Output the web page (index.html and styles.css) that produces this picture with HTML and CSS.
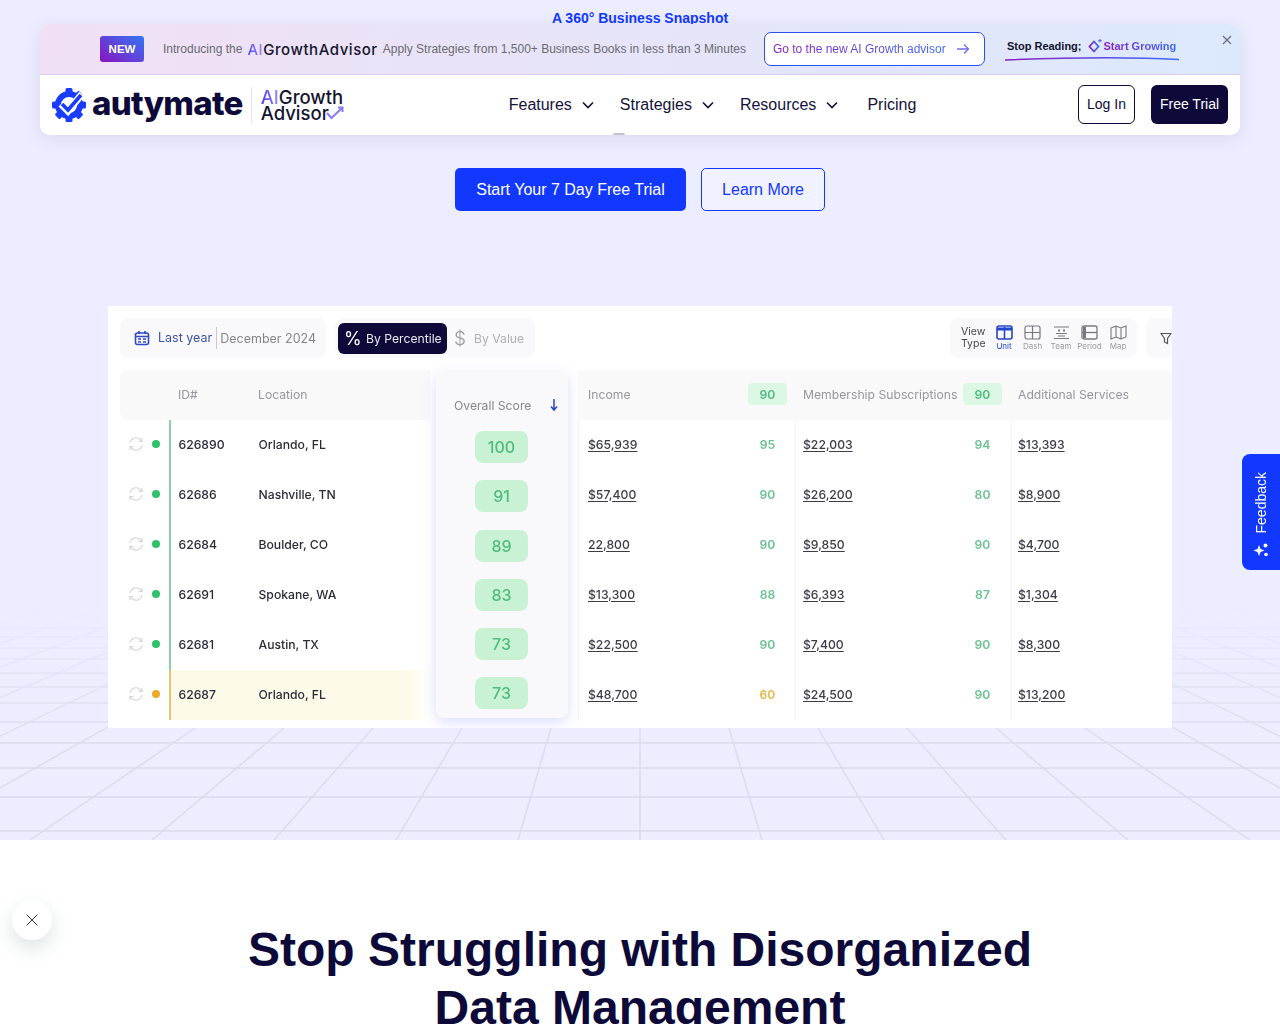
FILE: index.html
```html
<!DOCTYPE html>
<html lang="en">
<head>
<meta charset="utf-8">
<title>Autymate</title>
<link rel="stylesheet" href="styles.css">
</head>
<body>
<svg class="defs" width="0" height="0" aria-hidden="true">
  <defs>
    <linearGradient id="gradBrand" x1="0" y1="0" x2="1" y2="0"><stop offset="0" stop-color="#8a1fc4"/><stop offset="1" stop-color="#3a6bf5"/></linearGradient>
    <linearGradient id="fade" x1="0" y1="600" x2="0" y2="760" gradientUnits="userSpaceOnUse"><stop offset="0" stop-color="#fff" stop-opacity="0"/><stop offset="1" stop-color="#fff"/></linearGradient>
    <mask id="gridMask" maskUnits="userSpaceOnUse" x="0" y="0" width="1280" height="840"><rect width="1280" height="840" fill="url(#fade)"/></mask>
    <symbol id="sync" viewBox="0 0 16 16"><path d="M2 7a6 6 0 0 1 10.4-3.2L14 5.5M14 2v3.5h-3.5M14 9a6 6 0 0 1-10.4 3.2L2 10.5M2 14v-3.5h3.5" fill="none" stroke="#d5d6da" stroke-width="1.2"/></symbol>
  </defs>
</svg>
<div class="page">
  <section class="hero">
    <svg class="grid-bg" width="1280" height="840" viewBox="0 0 1280 840" aria-hidden="true">
      <g mask="url(#gridMask)" stroke="#d9daee" stroke-width="1.4" fill="none">
        <path d="M0 628H1280M0 637H1280M0 648H1280M0 659H1280M0 673H1280M0 687H1280M0 703H1280M0 722H1280M0 743H1280M0 768H1280M0 797H1280M0 831H1280"/>
        <path d="M640 426L-824 840M640 426L-702 840M640 426L-580 840M640 426L-458 840M640 426L-336 840M640 426L-214 840M640 426L-92 840M640 426L30 840M640 426L152 840M640 426L274 840M640 426L396 840M640 426L518 840M640 426L640 840M640 426L762 840M640 426L884 840M640 426L1006 840M640 426L1128 840M640 426L1250 840M640 426L1372 840M640 426L1494 840M640 426L1616 840M640 426L1738 840M640 426L1860 840M640 426L1982 840M640 426L2104 840"/>
      </g>
    </svg>
    <p class="tagline">A 360° Business Snapshot</p>
    <div class="cta-row">
      <a class="btn btn-primary">Start Your 7 Day Free Trial</a>
      <a class="btn btn-outline">Learn More</a>
    </div>

    <div class="panel">
      <div class="toolbar">
        <div class="pill pill-date">
          <svg class="ico-cal" width="16" height="16" viewBox="0 0 16 16"><rect x="1.5" y="3" width="13" height="11.5" rx="2" fill="none" stroke="#2f47c8" stroke-width="1.6"/><path d="M1.5 6.5h13M5 1v3M11 1v3" stroke="#2f47c8" stroke-width="1.6"/><path d="M4 9h3M9 9h3M4 12h3M9 12h3" stroke="#2f47c8" stroke-width="1.3"/></svg>
          <span class="last-year">Last year</span>
          <span class="date-val">December 2024</span>
        </div>
        <div class="pill pill-mode">
          <span class="mode-on"><span class="mode-sym">%</span>By Percentile</span>
          <span class="mode-off"><span class="mode-sym">$</span>By Value</span>
        </div>
        <div class="pill pill-view">
          <span class="view-title">View<br>Type</span>
          <span class="view-item view-on"><svg width="17" height="15" viewBox="0 0 17 15"><rect x="1" y="1" width="15" height="13" rx="2" fill="none" stroke="#2446c8" stroke-width="1.6"/><path d="M1 2.5h15v3H1z" fill="#2446c8"/><path d="M8.5 2v12" stroke="#2446c8" stroke-width="1.6"/></svg>Unit</span>
          <span class="view-item"><svg width="17" height="15" viewBox="0 0 17 15"><rect x="1" y="1" width="15" height="13" rx="2" fill="none" stroke="#77777f" stroke-width="1.2"/><path d="M8.5 1v13M1 7.5h15" stroke="#77777f" stroke-width="1.2"/></svg>Dash</span>
          <span class="view-item"><svg width="17" height="15" viewBox="0 0 17 15"><path d="M1 2h15M1 13.5h15M3 8.5h11M5 11h7" stroke="#77777f" stroke-width="1.1"/><path d="M5 4.5h2v2H5zM10 4.5h2v2h-2z" fill="#77777f"/></svg>Team</span>
          <span class="view-item"><svg width="17" height="15" viewBox="0 0 17 15"><rect x="1" y="1" width="15" height="13" rx="2" fill="none" stroke="#77777f" stroke-width="1.3"/><path d="M1 7.5h15" stroke="#77777f" stroke-width="1.3"/><path d="M2 2h3v11H2z" fill="#77777f"/></svg>Period</span>
          <span class="view-item"><svg width="17" height="15" viewBox="0 0 17 15"><path d="M1 3l5-2 5 2 5-2v11l-5 2-5-2-5 2zM6 1v11M11 3v11" fill="none" stroke="#77777f" stroke-width="1.1"/></svg>Map</span>
        </div>
        <div class="pill pill-filter">
          <svg width="12" height="13" viewBox="0 0 12 13"><path d="M1 1.500h10L7.500 6.500v5l-3-1.500V6.500z" fill="none" stroke="#55555c" stroke-width="1.2"/></svg>
        </div>
      </div>

      <div class="tbl">
        <div class="col-left">
          <div class="hd-left"><span class="c-id">ID#</span><span>Location</span></div>
          <div class="row-left"><span class="status"><svg class="sync" width="16" height="16"><use href="#sync"/></svg><i class="dot"></i></span><span class="row-main"><span class="c-id">626890</span><span>Orlando, FL</span></span></div>
          <div class="row-left"><span class="status"><svg class="sync" width="16" height="16"><use href="#sync"/></svg><i class="dot"></i></span><span class="row-main"><span class="c-id">62686</span><span>Nashville, TN</span></span></div>
          <div class="row-left"><span class="status"><svg class="sync" width="16" height="16"><use href="#sync"/></svg><i class="dot"></i></span><span class="row-main"><span class="c-id">62684</span><span>Boulder, CO</span></span></div>
          <div class="row-left"><span class="status"><svg class="sync" width="16" height="16"><use href="#sync"/></svg><i class="dot"></i></span><span class="row-main"><span class="c-id">62691</span><span>Spokane, WA</span></span></div>
          <div class="row-left"><span class="status"><svg class="sync" width="16" height="16"><use href="#sync"/></svg><i class="dot"></i></span><span class="row-main"><span class="c-id">62681</span><span>Austin, TX</span></span></div>
          <div class="row-left row-warn"><span class="status"><svg class="sync" width="16" height="16"><use href="#sync"/></svg><i class="dot dot-warn"></i></span><span class="row-main"><span class="c-id">62687</span><span>Orlando, FL</span></span></div>
        </div>

        <div class="col-score">
          <div class="hd-score"><span>Overall Score</span><svg width="10" height="14" viewBox="0 0 10 14"><path d="M5 1v11M2 8.500l3 3.500 3-3.500" fill="none" stroke="#2446c8" stroke-width="1.5"/></svg></div>
          <div class="chip-list">
            <span class="chip">100</span><span class="chip">91</span><span class="chip">89</span><span class="chip">83</span><span class="chip">73</span><span class="chip">73</span>
          </div>
        </div>

        <div class="col-data col-income">
          <div class="hd-data"><span>Income</span><b class="badge">90</b></div>
          <div class="cell"><u>$65,939</u><b class="pct">95</b></div>
          <div class="cell"><u>$57,400</u><b class="pct">90</b></div>
          <div class="cell"><u>22,800</u><b class="pct">90</b></div>
          <div class="cell"><u>$13,300</u><b class="pct">88</b></div>
          <div class="cell"><u>$22,500</u><b class="pct">90</b></div>
          <div class="cell"><u>$48,700</u><b class="pct pct-warn">60</b></div>
        </div>
        <div class="col-data col-member">
          <div class="hd-data hd-member"><span>Membership Subscriptions</span><b class="badge">90</b></div>
          <div class="cell"><u>$22,003</u><b class="pct">94</b></div>
          <div class="cell"><u>$26,200</u><b class="pct">80</b></div>
          <div class="cell"><u>$9,850</u><b class="pct">90</b></div>
          <div class="cell"><u>$6,393</u><b class="pct">87</b></div>
          <div class="cell"><u>$7,400</u><b class="pct">90</b></div>
          <div class="cell"><u>$24,500</u><b class="pct">90</b></div>
        </div>
        <div class="col-data col-extra">
          <div class="hd-data hd-extra"><span>Additional Services</span></div>
          <div class="cell"><u>$13,393</u></div>
          <div class="cell"><u>$8,900</u></div>
          <div class="cell"><u>$4,700</u></div>
          <div class="cell"><u>$1,304</u></div>
          <div class="cell"><u>$8,300</u></div>
          <div class="cell"><u>$13,200</u></div>
        </div>
      </div>
    </div>
  </section>

  <section class="next">
    <h2>Stop Struggling with Disorganized<br>Data Management</h2>
  </section>

  <header class="site-head">
    <div class="promo">
      <span class="new">NEW</span>
      <span class="promo-txt">Introducing the</span>
      <span class="promo-brand"><em>AI</em>GrowthAdvisor</span>
      <span class="promo-txt">Apply Strategies from 1,500+ Business Books in less than 3 Minutes</span>
      <a class="promo-btn"><span>Go to the new AI Growth advisor</span><svg width="14" height="12" viewBox="0 0 14 12"><path d="M1 6h11.500M8 1.500L12.500 6 8 10.500" fill="none" stroke="#6f70f0" stroke-width="1.300"/></svg></a>
      <div class="promo-slogan">
        <div class="slogan-line"><b>Stop Reading;</b><svg width="16" height="16" viewBox="0 0 16 16"><path d="M7 3.500L11.500 8.500 7 13.500 2.500 8.500z" fill="none" stroke="url(#gradBrand)" stroke-width="1.800"/><path d="M13 1v3.500M11.200 2.700h3.500" stroke="#5a58e0" stroke-width="1"/></svg><span class="grow">Start Growing</span></div>
        <svg class="swoosh" width="176" height="5" viewBox="0 0 176 5"><path d="M1 4C50 2 120 .5 175 3.500" fill="none" stroke="url(#gradBrand)" stroke-width="1.500"/></svg>
      </div>
      <svg class="promo-x" width="10" height="10" viewBox="0 0 10 10"><path d="M1 1l8 8M9 1l-8 8" stroke="#666a78" stroke-width="1.100"/></svg>
    </div>
    <nav class="navbar">
      <div class="brand">
        <svg class="gear" width="34" height="36" viewBox="0 0 34 36">
          <g fill="#1a3cff">
            <rect x="13.500" y="1" width="7" height="7" rx="1.500"/>
            <rect x="13.500" y="1" width="7" height="7" rx="1.500" transform="rotate(45 17 18)"/>
            <rect x="13.500" y="1" width="7" height="7" rx="1.500" transform="rotate(90 17 18)"/>
            <rect x="13.500" y="1" width="7" height="7" rx="1.500" transform="rotate(135 17 18)"/>
            <rect x="13.500" y="1" width="7" height="7" rx="1.500" transform="rotate(180 17 18)"/>
            <rect x="13.500" y="1" width="7" height="7" rx="1.500" transform="rotate(225 17 18)"/>
            <rect x="13.500" y="1" width="7" height="7" rx="1.500" transform="rotate(270 17 18)"/>
          </g>
          <circle cx="17" cy="18" r="11" fill="none" stroke="#1a3cff" stroke-width="6"/>
          <path d="M9 17l7 7L30 7" fill="none" stroke="#fff" stroke-width="7"/>
          <path d="M10 17l6 6L29 8" fill="none" stroke="#1a3cff" stroke-width="3.600"/>
        </svg>
        <span class="wordmark">autymate</span>
        <span class="ai-mark"><span><em>AI</em>Growth</span><span class="adv">Advisor<svg width="18" height="14" viewBox="0 0 18 14"><path d="M1 7l4.500 5L16 2M12 1.500h4.500V6" fill="none" stroke="#8a7bf0" stroke-width="2"/></svg></span></span>
      </div>
      <div class="menu">
        <a class="menu-item">Features<svg width="12" height="8" viewBox="0 0 12 8"><path d="M1 1.500l5 5 5-5" fill="none" stroke="#14123a" stroke-width="1.600"/></svg></a>
        <a class="menu-item">Strategies<svg width="12" height="8" viewBox="0 0 12 8"><path d="M1 1.500l5 5 5-5" fill="none" stroke="#14123a" stroke-width="1.600"/></svg></a>
        <a class="menu-item">Resources<svg width="12" height="8" viewBox="0 0 12 8"><path d="M1 1.500l5 5 5-5" fill="none" stroke="#14123a" stroke-width="1.600"/></svg></a>
        <a class="menu-item">Pricing</a>
      </div>
      <div class="auth">
        <a class="login">Log In</a>
        <a class="trial">Free Trial</a>
      </div>
      <i class="peek"></i>
    </nav>
  </header>

  <aside class="feedback">
    <span>Feedback</span>
    <svg width="16" height="16" viewBox="0 0 16 16"><path d="M6 3l1.500 4 4 1.500-4 1.500L6 14l-1.500-4-4-1.500 4-1.500z" fill="#fff"/><circle cx="12.500" cy="3.500" r="2" fill="#fff"/><circle cx="13" cy="12.500" r="1.800" fill="#fff"/></svg>
  </aside>
  <button class="close-fab" aria-label="Close"><svg width="12" height="12" viewBox="0 0 12 12"><path d="M.5.500l11 11M11.500.500l-11 11" stroke="#1a1a2a" stroke-width=".9"/></svg></button>
</div>
</body>
</html>
```

FILE: styles.css
```css
* { box-sizing: border-box; }
html, body { margin: 0; padding: 0; }
body { font-family: "Liberation Sans", Arial, sans-serif; color: #0d0a3a; background: #fff; }
a { text-decoration: none; }
.defs { position: absolute; }
.page { position: relative; width: 1280px; height: 1024px; overflow: hidden; }

/* hero */
.hero { position: relative; height: 840px; background: #ecedfe; padding-top: 10px; overflow: hidden; }
.grid-bg { position: absolute; left: 0; top: 0; }
.tagline { position: relative; margin: 0; height: 16px; line-height: 16px; text-align: center; font-size: 14px; font-weight: 700; color: #1238ff; }
.cta-row { position: relative; display: flex; justify-content: center; gap: 15px; margin-top: 142px; }
.btn { display: flex; align-items: center; justify-content: center; height: 43px; border-radius: 5px; font-size: 16px; }
.btn-primary { width: 231px; background: #1238ff; color: #fff; }
.btn-outline { width: 124px; border: 1px solid #1238ff; color: #1238ff; background: #f1f2ff; }

/* dashboard picture */
.panel { position: relative; width: 1064px; height: 422px; margin: 95px 0 0 108px; background: #fff; overflow: hidden; font-family: Inter, "Liberation Sans", sans-serif; filter: blur(.3px); }
.toolbar { display: flex; align-items: flex-start; gap: 9px; padding: 12px 0 0 12px; height: 64px; }
.pill { display: flex; align-items: center; height: 40px; background: #f9f9fb; border-radius: 8px; flex-shrink: 0; }
.pill-date { width: 206px; padding-left: 14px; font-size: 12.500px; }
.ico-cal { margin-right: 8px; }
.last-year { color: #3d52a8; padding-right: 4px; border-right: 1px solid #c9c9cf; line-height: 22px; }
.date-val { color: #85858c; padding-left: 3px; }
.pill-mode { width: 200px; padding-left: 3px; font-size: 12.200px; }
.mode-on { display: flex; align-items: center; width: 109px; height: 31px; padding-left: 6px; border-radius: 6px; background: #0d0a3a; color: #e8e8ef; }
.mode-on .mode-sym { width: 22px; font-size: 18px; color: #fff; }
.mode-off { display: flex; align-items: center; padding-left: 7px; color: #b0b0b5; }
.mode-off .mode-sym { width: 20px; font-size: 19px; font-weight: 300; color: #9a9aa0; }
.pill-view { width: 187px; margin-left: auto; padding-left: 11px; gap: 6px; }
.view-title { font-size: 10.500px; line-height: 12px; color: #44444c; width: 25.750px; }
.view-item { display: flex; flex-direction: column; align-items: center; width: 22.500px; font-size: 8px; line-height: 9px; color: #9b9ba2; gap: 2px; }
.view-on { color: #2446c8; }
.pill-filter { width: 40px; margin-right: -14px; padding-left: 14px; }

.tbl { display: flex; margin: 0 0 0 12px; font-size: 12.200px; }
.col-left { width: 310px; flex-shrink: 0; color: #2a2a38; font-weight: 500; }
.hd-left { display: flex; align-items: center; height: 50px; padding: 0 0 2px 58px; background: #f9f9fa; border-radius: 8px 0 0 8px; color: #96969c; font-weight: 400; }
.c-id { width: 80px; }
.row-left { display: flex; height: 50px; }
.status { display: flex; align-items: center; width: 50px; padding: 0 0 2px 8px; gap: 8px; }
.sync { flex-shrink: 0; }
.dot { width: 8px; height: 8px; border-radius: 50%; background: #2fc06c; }
.dot-warn { background: #eea92a; }
.row-main { flex: 1; display: flex; align-items: center; padding: 0 0 2px 7.500px; border-left: 2px solid #8bd0ac; margin-left: -1px; }
.row-warn .row-main { background: linear-gradient(90deg, #fefaea 92%, #fff); border-left-color: #e8c372; }

.col-score { width: 132px; height: 346px; margin: 2px 0 0 6px; flex-shrink: 0; background: #f9f9fb; border-radius: 0 0 8px 8px; box-shadow: 0 4px 14px rgba(90, 100, 240, .22); }
.hd-score { display: flex; align-items: center; justify-content: space-between; height: 48px; padding: 18px 9px 0 18px; color: #85858c; }
.chip-list { display: flex; flex-direction: column; align-items: center; gap: 17.300px; padding: 11px 1px 0 0; }
.chip { display: flex; align-items: center; justify-content: center; width: 53px; height: 32px; border-radius: 8px; background: #c9f2d5; color: #50bb80; font-size: 16px; font-weight: 500; }

.col-data { flex-shrink: 0; color: #3c3c48; font-weight: 500; border-left: 1px solid #f4f4f6; }
.col-income { width: 217px; margin-left: 10px; }
.col-member { width: 216px; }
.col-extra { width: 161px; }
.hd-data { display: flex; align-items: center; justify-content: space-between; height: 50px; margin-left: -1px; padding: 0 8px 2px 10px; background: #f9f9fa; color: #96969c; font-weight: 400; }
.hd-member { padding-left: 8px; }
.col-member .hd-data { padding-right: 9px; }
.hd-extra { padding-left: 7px; }
.badge { display: flex; align-items: center; justify-content: center; width: 39px; height: 22px; border-radius: 4px; background: #dcf8e4; color: #50bb80; font-weight: 600; }
.cell { display: flex; align-items: center; justify-content: space-between; height: 50px; padding: 0 8px 2px 9px; }
.col-member .cell { padding-right: 9px; padding-left: 7px; }
.col-extra .cell { padding-left: 6px; }
.cell u { text-underline-offset: 2px; }
.pct { width: 39px; text-align: center; color: #6cc294; font-weight: 600; }
.pct-warn { color: #e5b84a; }

/* next section */
.next { padding-top: 81px; text-align: center; }
.next h2 { margin: 0; font-size: 48px; line-height: 58px; font-weight: 700; color: #0d0a3a; }

/* site header over hero */
.site-head { position: absolute; left: 40px; top: 24px; width: 1200px; height: 111px; border-radius: 10px; background: #fff; box-shadow: 0 4px 18px rgba(80, 80, 140, .12); }
.promo { position: relative; display: flex; align-items: center; height: 51px; padding-left: 60px; border-radius: 10px 10px 0 0; background: linear-gradient(100deg, #f1e0f5 0%, #e7e4f8 45%, #dce9fd 100%); border-bottom: 1px solid #dcc9f5; font-size: 12px; color: #6a6a72; }
.new { display: flex; align-items: center; justify-content: center; width: 44px; height: 26px; margin-right: 19px; border-radius: 3px; background: linear-gradient(35deg, #8a14c0, #3276f5); color: #fff; font-size: 11.500px; font-weight: 700; }
.promo-brand { margin: 0 5px 0 5px; font-family: Inter, "Liberation Sans", sans-serif; font-size: 15px; font-weight: 500; color: #15142e; letter-spacing: .55px; }
.promo-brand em, .ai-mark em { font-style: normal; background: linear-gradient(90deg, #4a3ff0, #a08cf5); -webkit-background-clip: text; background-clip: text; color: transparent; }
.promo-btn { display: flex; align-items: center; justify-content: space-between; flex-shrink: 0; width: 221px; height: 34px; margin-left: 18px; padding: 0 14px 0 8px; background: #fff; border: 1px solid #2a50f0; border-radius: 7px; }
.promo-btn span { background: linear-gradient(90deg, #8a1fc4, #3a6bf5); -webkit-background-clip: text; background-clip: text; color: transparent; }
.promo-slogan { margin: 0 0 0 19px; width: 176px; }
.slogan-line { display: flex; align-items: center; padding-left: 3px; height: 18px; font-size: 11px; font-weight: 700; color: #15142e; }
.slogan-line svg { margin: 0 1px 0 5px; }
.grow { background: linear-gradient(90deg, #8a1fc4, #3a6bf5); -webkit-background-clip: text; background-clip: text; color: transparent; }
.swoosh { display: block; margin-top: 1px; }
.promo-x { position: absolute; right: 8px; top: 11px; }

.navbar { position: relative; display: flex; align-items: center; justify-content: space-between; height: 60px; padding: 0 12px; background: #fff; border-radius: 0 0 10px 10px; }
.brand { display: flex; align-items: center; width: 292px; }
.gear { flex-shrink: 0; }
.wordmark { margin: 0 0 4px 6px; font-family: Inter, "Liberation Sans", sans-serif; font-size: 33px; font-weight: 800; letter-spacing: -.7px; color: #0d0a3a; }
.ai-mark { display: flex; flex-direction: column; margin-left: 8px; padding-left: 9px; height: 36px; justify-content: center; border-left: 1px solid #e3e3e8; font-family: Inter, "Liberation Sans", sans-serif; font-size: 18.500px; font-weight: 500; line-height: 16px; color: #15142e; }
.adv { display: flex; align-items: center; }
.adv svg { margin-left: -3px; }
.menu { display: flex; align-items: center; margin-left: 3px; font-size: 16px; color: #14123a; }
.menu-item { display: flex; align-items: center; gap: 10px; margin-right: 26px; color: #14123a; }
.menu-item:last-child { margin-right: 0; margin-left: 3px; }
.auth { display: flex; gap: 16px; margin-bottom: 2px; font-size: 14px; }
.login, .trial { display: flex; align-items: center; justify-content: center; height: 39px; border-radius: 6px; }
.login { width: 57px; border: 1px solid #0d0a3a; color: #0d0a3a; }
.trial { width: 77px; background: #0d0a3a; color: #fff; }
.peek { position: absolute; left: 573px; bottom: 0; width: 12px; height: 2px; border-radius: 6px 6px 0 0; background: #c3c3cc; }

.feedback { position: absolute; right: 0; top: 454px; display: flex; flex-direction: column; align-items: center; justify-content: center; gap: 8px; width: 38px; height: 116px; padding-top: 6px; border-radius: 8px 0 0 8px; background: #1238ff; color: #fff; font-size: 14px; }
.feedback span { writing-mode: vertical-rl; transform: rotate(180deg); }
.close-fab { position: absolute; left: 12px; top: 900px; display: flex; align-items: center; justify-content: center; width: 40px; height: 40px; padding: 0; border: 0; border-radius: 50%; background: #fff; box-shadow: 0 8px 20px rgba(80, 110, 110, .2); }
```
